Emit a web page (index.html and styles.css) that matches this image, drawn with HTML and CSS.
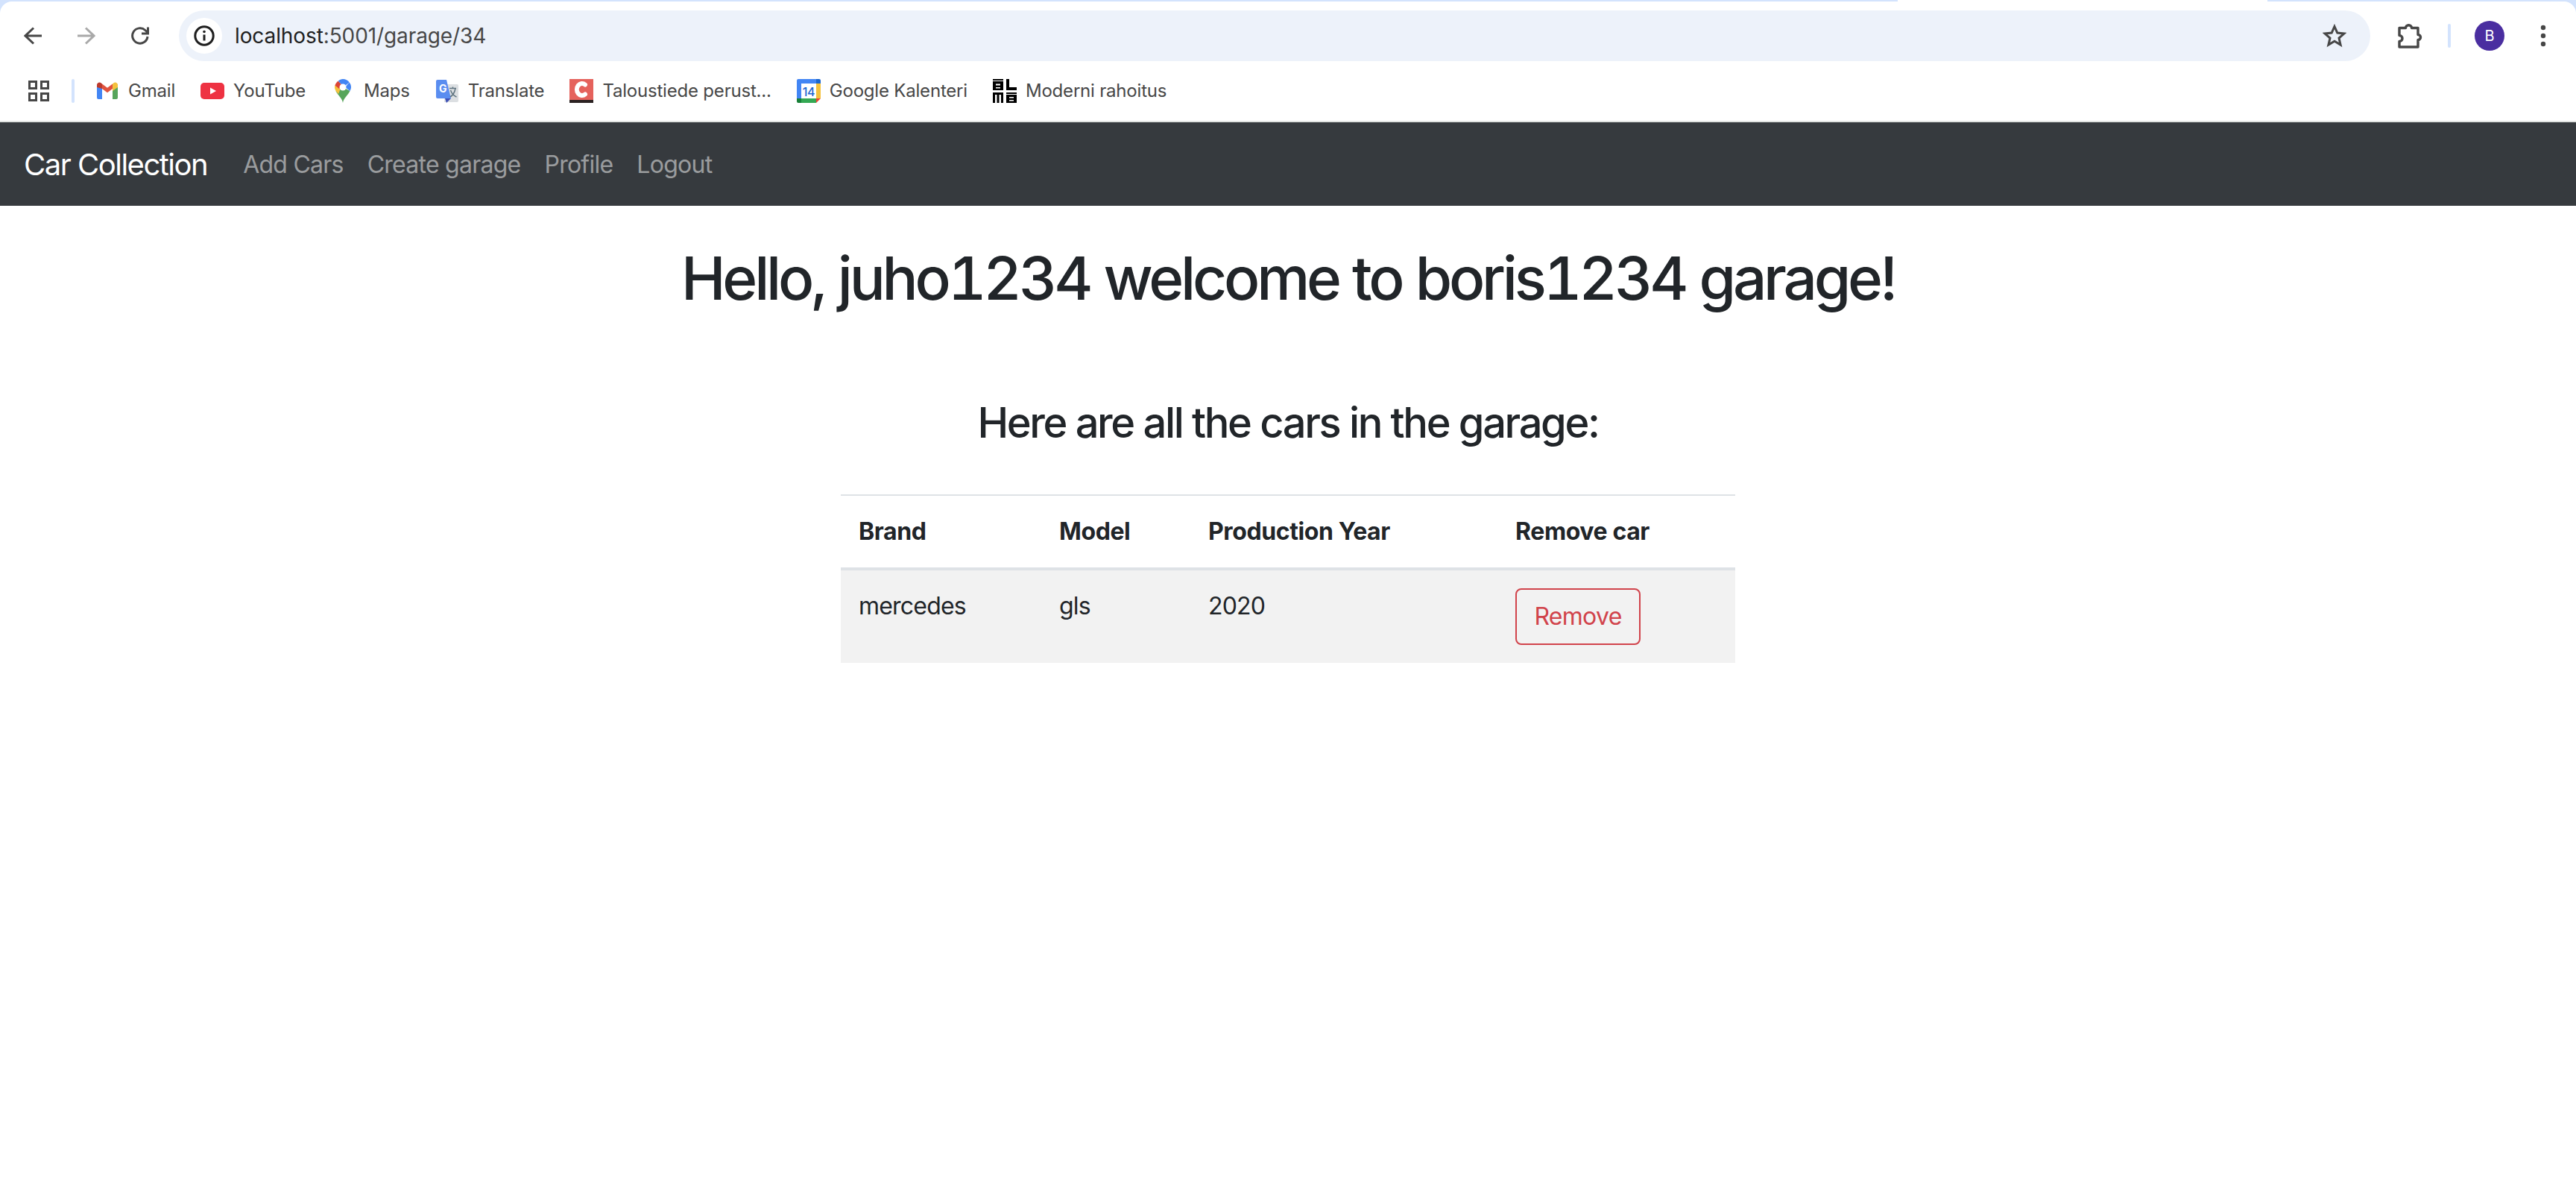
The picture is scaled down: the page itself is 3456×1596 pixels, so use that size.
FILE: index.html
```html
<!DOCTYPE html>
<html lang="en">
<head>
<meta charset="utf-8">
<title>Car Collection</title>
<link rel="stylesheet" href="styles.css">
</head>
<body>
<div class="chrome">
  <div class="strip"><span class="strip-blue"></span><span class="strip-tab"></span><span class="strip-blue strip-end"></span></div>
  <div class="toolbar">
    <svg class="tb-icon" viewBox="0 0 24 24"><path class="ico" d="M24 12H2M13 1.5 2 12l11 10.5"/></svg>
    <svg class="tb-icon" viewBox="0 0 24 24"><path class="ico ico-dim" d="M0 12h22M11 1.5 22 12 11 22.500"/></svg>
    <svg class="tb-icon" viewBox="0 0 24 24"><path class="ico" d="M22 13a10.200 10.200 0 1 1-3.200-8.500L22.500 8M22.500 0.500V9H14"/></svg>
    <div class="urlbar">
      <span class="info"><svg class="info-svg" viewBox="0 0 28 28"><circle cx="14" cy="14" r="12.200" class="ico-dark"/><path class="ico-dark" d="M14 12.500V20.500"/><circle cx="14" cy="8.500" r="1.800" class="dot-dark"/></svg></span>
      <span class="url"><span class="url-host">localhost</span>:5001/garage/34</span>
      <svg class="star" viewBox="0 0 32 32"><path class="ico ico-star" d="M16 3.500l3.800 8.500 9.200 0.900-7 6.100 2.100 9.100-8.100-4.800-8.100 4.800 2.100-9.100-7-6.100 9.200-0.900z"/></svg>
    </div>
    <svg class="puzzle" viewBox="0 0 34 34"><path class="ico ico-puzzle" d="M2 6.500h8.500a4 3.800 0 0 1 8 0H27v9a3.500 3.500 0 0 1 0 7V32H2v-7.500a4 4 0 0 0 0-8z"/></svg>
    <span class="tb-divider"></span>
    <span class="avatar">B</span>
    <svg class="dots" viewBox="0 0 8 30"><circle cx="4" cy="4" r="3.200"/><circle cx="4" cy="15" r="3.200"/><circle cx="4" cy="26" r="3.200"/></svg>
  </div>
  <div class="bookmarks">
    <svg class="grid-icon" viewBox="0 0 28 28"><path class="grid-path" d="M1.500 1.500h9v9h-9zM17.500 1.500h9v9h-9zM1.500 17.500h9v9h-9zM17.500 17.500h9v9h-9z"/></svg>
    <span class="bm-divider"></span>
    <div class="bm-list">
      <a class="bm"><svg class="fav" viewBox="0 0 32 32"><path fill="#4285f4" d="M2 27V7l7 5.500V27H4a2 2 0 0 1-2-2z"/><path fill="#57a55b" d="M23 27V12.500L30 7v18a2 2 0 0 1-2 2z"/><path fill="#bd3a2c" d="M2 11V8c0-3 3.500-4.300 5.500-2.800L9 6.500V13z"/><path fill="#e0533f" d="M9 6.500l7 5.300 7-5.300V13l-7 5.300L9 13z"/><path fill="#f4c13d" d="M23 6.500l1.500-1.300c2-1.500 5.500-.2 5.500 2.800v3l-7 5z"/></svg><span>Gmail</span></a>
      <a class="bm"><svg class="fav" viewBox="0 0 32 32"><rect x="0" y="5" width="32" height="22" rx="5" fill="#ee3242"/><path fill="#fff" d="M13 11.500l8 4.500-8 4.500z"/></svg><span>YouTube</span></a>
      <a class="bm"><svg class="fav" viewBox="0 0 32 32"><path fill="#57a55b" d="M16 32C15 25 9 22 6.500 16l9.500-5 9.500 5C23 22 17 25 16 32z"/><path fill="#f4c13d" d="M6.500 16C5.500 14.300 5 12.700 5 11c0-1 .1-1.800.4-2.600L13 12.500 10 20z"/><path fill="#db4437" d="M5.400 8.400C6.200 6 7.700 4 9.700 2.700L15 8l-4 5z"/><path fill="#4285f4" d="M9.700 2.700C11.500 1 13.700 0 16 0c3.700 0 6.700 1.700 8.700 4.500L19 9l-5-2z"/><path fill="#4285f4" d="M24.700 4.500C26.200 6.300 27 8.500 27 11c0 1.800-.6 3.500-1.500 5L19 11z"/><circle cx="16" cy="11" r="4.500" fill="#fff"/></svg><span>Maps</span></a>
      <a class="bm"><svg class="fav" viewBox="0 0 32 32"><path fill="#dcdfe2" d="M14 7h15a2 2 0 0 1 2 2v20a2 2 0 0 1-2 2H12z"/><path fill="#3f51b5" d="M13 26h8l-6 6z"/><path fill="#5a8df0" d="M3 1h12l6 25H3a2 2 0 0 1-2-2V3a2 2 0 0 1 2-2z"/><text class="g-letter" x="5" y="18">G</text><path class="tr-glyph" d="M19 12.500h9M23.500 10.500v2M20 24c4-2.500 6-6 7-11.500M20.500 15c1.500 4 4 7.500 8 9"/></svg><span>Translate</span></a>
      <a class="bm"><svg class="fav" viewBox="0 0 32 32"><rect width="32" height="28" y="0" fill="#e5625c"/><rect y="28" width="32" height="4" fill="#2b2222"/><path class="c-arc" d="M21 7.500a7 8 0 1 0 0 13"/></svg><span>Taloustiede perust...</span></a>
      <a class="bm"><svg class="fav" viewBox="0 0 32 32"><rect width="32" height="32" rx="2" fill="#fff"/><path fill="#4285f4" d="M2 0h24v6H6v20H0V2a2 2 0 0 1 2-2z"/><path fill="#1a66d0" d="M26 0h4a2 2 0 0 1 2 2v4h-6z"/><path fill="#f4c13d" d="M26 6h6v20h-6z"/><path fill="#34a853" d="M6 26h20v6H6z"/><path fill="#188038" d="M0 26h6v6H2a2 2 0 0 1-2-2z"/><path fill="#ea4335" d="M26 26h6l-6 6z"/><text class="cal-num" x="16" y="22.500">14</text></svg><span>Google Kalenteri</span></a>
      <a class="bm"><svg class="fav" viewBox="0 0 32 32"><path fill="#000" fill-rule="evenodd" d="M0 3h14v12H0zM4 6.500v2h6v-2zM4 11v1.500h6V11z"/><rect width="14" height="2" fill="#000"/><path fill="#000" d="M18 0h4v11h10v4H18z"/><path fill="#000" d="M0 18h14v14h-3V21H8.500v11h-3V21H3v11H0z"/><path fill="#000" fill-rule="evenodd" d="M18 21h14v11H18zM22 24v1.500h6V24zM22 28v1.500h6V28z"/><rect x="18" y="18" width="14" height="2" fill="#000"/></svg><span>Moderni rahoitus</span></a>
    </div>
  </div>
</div>
<nav class="navbar">
  <a class="brand">Car Collection</a>
  <ul class="nav-links">
    <li><a>Add Cars</a></li>
    <li><a>Create garage</a></li>
    <li><a>Profile</a></li>
    <li><a>Logout</a></li>
  </ul>
</nav>
<main class="content">
  <h1 class="title">Hello, juho1234 welcome to boris1234 garage!</h1>
  <h3 class="subtitle">Here are all the cars in the garage:</h3>
  <table class="cars">
    <thead>
      <tr><th>Brand</th><th>Model</th><th>Production Year</th><th>Remove car</th></tr>
    </thead>
    <tbody>
      <tr><td>mercedes</td><td>gls</td><td>2020</td><td><button class="btn-remove">Remove</button></td></tr>
    </tbody>
  </table>
</main>
</body>
</html>
```
FILE: styles.css
```css
* { box-sizing: border-box; }
html, body { margin: 0; padding: 0; height: 100%; }
body {
  background: #fff;
  color: #212529;
  font-family: Inter, "Noto Sans", sans-serif;
  font-size: 32px;
  line-height: 48px;
  overflow: hidden;
}
.chrome { background: #d3e3fd; }
.strip { display: flex; height: 2px; }
.strip-blue { flex: 1; background: #d3e3fd; }
.strip-end { flex: 0 0 414px; }
.strip-tab { flex: 0 0 496px; background: #fff; }
.toolbar {
  display: flex;
  align-items: center;
  height: 92px;
  padding: 12px 40px 12px 32px;
  background: #fff;
  border-radius: 16px 16px 0 0;
}
.tb-icon { width: 24px; height: 24px; margin-right: 48px; flex: none; }
.tb-icon:nth-child(3) { margin-right: 40px; }
.ico { fill: none; stroke: #474747; stroke-width: 3; }
.ico-dim { stroke: #a9a9a9; }
.ico-star { stroke-width: 3; }
.ico-puzzle { stroke-width: 3.400; stroke-linejoin: round; }
.ico-dark { fill: none; stroke: #1f1f1f; stroke-width: 3; }
.dot-dark { fill: #1f1f1f; }
.urlbar {
  flex: 1;
  height: 68px;
  display: flex;
  align-items: center;
  padding: 0 32px 0 10px;
  background: #edf2fa;
  border-radius: 34px;
}
.info {
  width: 48px;
  height: 48px;
  border-radius: 50%;
  background: #fff;
  display: flex;
  align-items: center;
  justify-content: center;
  flex: none;
}
.info-svg { width: 28px; height: 28px; }
.url {
  flex: 1;
  margin-left: 17px;
  font-family: Inter, sans-serif;
  font-size: 28px;
  letter-spacing: -0.1px;
  color: #474747;
}
.url-host { color: #1f1f1f; }
.star { width: 32px; height: 32px; flex: none; }
.puzzle { width: 34px; height: 34px; margin-left: 37px; flex: none; }
.tb-divider { width: 4px; height: 32px; border-radius: 2px; background: #d3e3fd; margin-left: 33px; flex: none; }
.avatar {
  width: 40px;
  height: 40px;
  margin-left: 32px;
  border-radius: 50%;
  background: #4a2ea0;
  color: #fff;
  font-size: 20px;
  line-height: 40px;
  text-align: center;
  flex: none;
}
.dots { width: 8px; height: 30px; margin-left: 48px; fill: #474747; flex: none; }
.bookmarks {
  display: flex;
  align-items: center;
  height: 70px;
  padding: 0 0 12px 38px;
  background: #fff;
  border-bottom: 2px solid #e1e3e1;
}
.grid-icon { width: 28px; height: 28px; flex: none; }
.grid-path { fill: none; stroke: #474747; stroke-width: 3; }
.bm-divider { width: 4px; height: 32px; border-radius: 2px; background: #d3e3fd; margin-left: 30px; flex: none; }
.bm-list { display: flex; align-items: center; gap: 34px; margin-left: 28px; }
.bm {
  display: flex;
  align-items: center;
  gap: 12px;
  font-family: Inter, sans-serif;
  font-size: 24px;
  letter-spacing: -0.2px;
  line-height: 32px;
  color: #474747;
  white-space: nowrap;
}
.fav { width: 32px; height: 32px; flex: none; }
.g-letter { font: 700 14px Inter, sans-serif; fill: #fff; }
.tr-glyph { fill: none; stroke: #5f7480; stroke-width: 1.500; }
.c-arc { fill: none; stroke: #fff; stroke-width: 6; stroke-linecap: round; }
.cal-num { font: 500 16px Inter, sans-serif; fill: #1a66d0; text-anchor: middle; }
.navbar {
  display: flex;
  align-items: center;
  height: 112px;
  padding: 1px 32px 0;
  background: #363a3e;
}
.brand { font-size: 40px; line-height: 60px; letter-spacing: -1.5px; color: #fff; margin-right: 48px; }
.nav-links { display: flex; gap: 32px; list-style: none; margin: 0; padding: 0; letter-spacing: -0.75px; }
.nav-links a { color: rgba(255, 255, 255, 0.5); }
.content { display: flex; flex-direction: column; align-items: center; }
.title {
  margin: 49px 0 0;
  font-size: 80px;
  line-height: 96px;
  font-weight: 550;
  letter-spacing: -4.2px;
  word-spacing: 1px;
  font-feature-settings: "tnum";
}
.subtitle { margin: 113px 0 0; font-size: 56px; line-height: 67px; font-weight: 550; letter-spacing: -2.35px; }
.cars {
  width: 1200px;
  margin-top: 62px;
  border-collapse: collapse;
  table-layout: fixed;
}
.cars th, .cars td { padding: 24px; text-align: left; vertical-align: top; letter-spacing: -0.8px; }
.cars th { font-weight: 700; letter-spacing: -0.4px; border-top: 2px solid #dee2e6; border-bottom: 4px solid #dee2e6; }
.cars th:nth-child(1) { width: 269px; }
.cars th:nth-child(2) { width: 200px; }
.cars th:nth-child(3) { width: 412px; }
.cars td { background: #f2f2f2; }
.btn-remove {
  display: block;
  width: 168px;
  height: 76px;
  padding: 0;
  background: transparent;
  border: 2px solid #d1434b;
  border-radius: 8px;
  color: #d1434b;
  font: 400 32px/48px Inter, sans-serif;
  letter-spacing: -0.7px;
}
```
